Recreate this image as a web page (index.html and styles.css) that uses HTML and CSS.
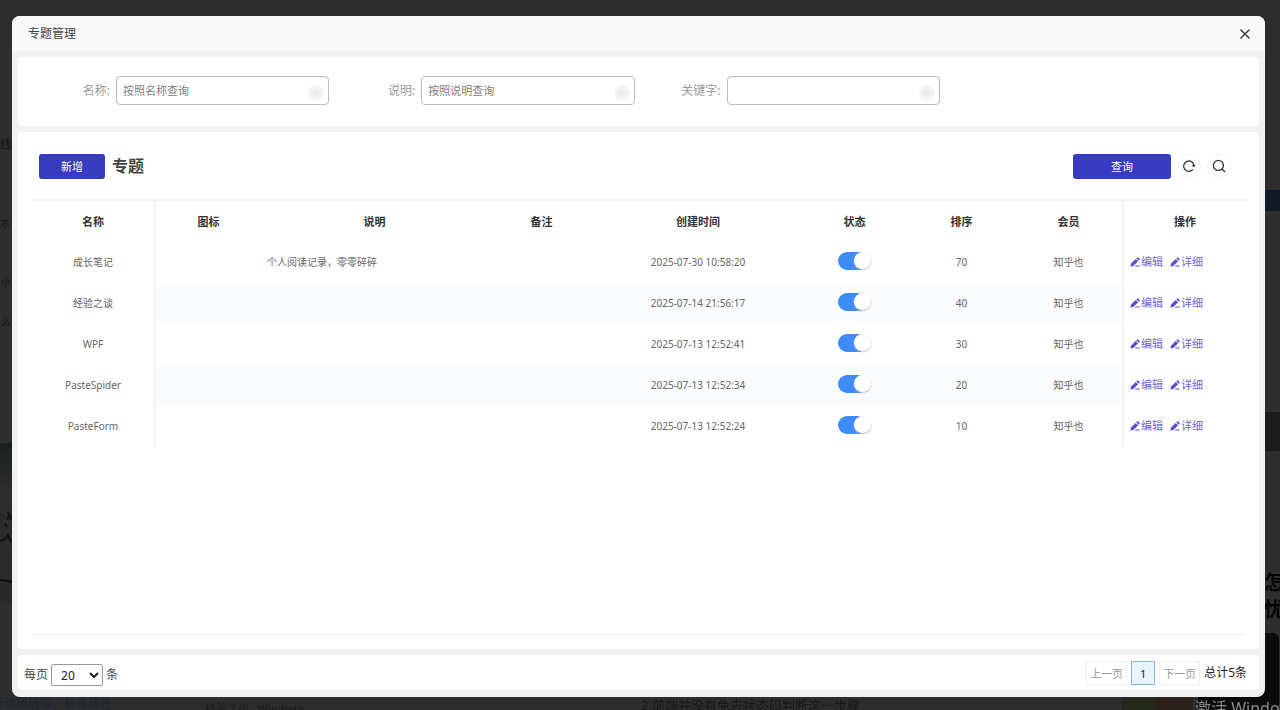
FILE: index.html
```html
<!DOCTYPE html>
<html lang="zh-CN">
<head>
<meta charset="utf-8">
<title>专题管理</title>
<link rel="stylesheet" href="styles.css">
</head>
<body>
<svg class="sprite" aria-hidden="true">
  <symbol id="pen" viewBox="0 0 10 10"><path d="M.4 9.600l.5-2.900L5.700 1.900l2.400 2.400L3.300 9.100zM6.300 1.300l.8-.8q.5-.4 1 0l1.400 1.400q.4.500 0 1l-.8.8zM5.200 8.600h4.400v1H5.200z" fill="currentColor"/></symbol>
</svg>

<div class="backdrop" aria-hidden="true">
  <span class="ghost ghost-a">贴线</span>
  <span class="ghost ghost-b">不</span>
  <span class="ghost ghost-c">小</span>
  <span class="ghost ghost-d">么</span>
  <span class="block block-left"></span>
  <svg class="scribble" viewBox="0 0 12 90"><path d="M8 12l3 8M7 19l4-4M5 24l2 3M0 41l5-2 3-4 3 7M0 80q6 0 12 2" fill="none" stroke="#111" stroke-width="2"/></svg>
  <span class="ghost ghost-link">及动用后端，包含属性</span>
  <span class="ghost ghost-tag">经验之谈 &nbsp; Windows</span>
  <span class="ghost ghost-line">2.前端并没有免去状态码判断这一步骤</span>
  <span class="block block-navy"></span>
  <span class="block block-gray"></span>
  <span class="block block-green"></span>
  <span class="block block-brown"></span>
  <span class="block block-black"></span>
  <span class="ghost ghost-big">怎<br>忧</span>
  <span class="watermark">激活 Windows</span>
</div>

<main class="dialog" role="dialog" aria-labelledby="dialog-title">
  <header class="dialog-head">
    <span class="dialog-title" id="dialog-title">专题管理</span>
    <button class="close" type="button" aria-label="关闭"><svg viewBox="0 0 12 12"><path d="M1.500 1.500l9 9M10.500 1.500l-9 9" stroke="#333" stroke-width="1.400" fill="none"/></svg></button>
  </header>

  <form class="panel filters">
    <div class="field"><label for="f-name">名称:</label><div class="box"><input id="f-name" type="text" placeholder="按照名称查询"><span class="clear"></span></div></div>
    <div class="field"><label for="f-desc">说明:</label><div class="box"><input id="f-desc" type="text" placeholder="按照说明查询"><span class="clear"></span></div></div>
    <div class="field"><label for="f-key">关键字:</label><div class="box"><input id="f-key" type="text"><span class="clear"></span></div></div>
  </form>

  <section class="panel content">
    <div class="toolbar">
      <button class="primary" type="button">新增</button>
      <h1>专题</h1>
      <button class="primary wide" type="button">查询</button>
      <button class="round" type="button" aria-label="刷新"><svg viewBox="0 0 14 14"><path d="M12 6.500A5.200 5.200 0 1 0 10.800 10.500" fill="none" stroke="#333" stroke-width="1.300"/><path d="M9.600 6h4l-1.600 2.600z" fill="#333"/></svg></button>
      <button class="round" type="button" aria-label="搜索"><svg viewBox="0 0 14 14"><circle cx="6.400" cy="6.400" r="5" fill="none" stroke="#333" stroke-width="1.300"/><path d="M10 10l3 3" stroke="#333" stroke-width="1.400"/></svg></button>
    </div>
    <div class="table-area">
      <table>
        <colgroup><col class="c-name"><col class="c-s"><col class="c-desc"><col class="c-s"><col class="c-time"><col class="c-s"><col class="c-s"><col class="c-s"><col class="c-ops"></colgroup>
        <thead><tr><th>名称</th><th>图标</th><th>说明</th><th>备注</th><th>创建时间</th><th>状态</th><th>排序</th><th>会员</th><th>操作</th></tr></thead>
        <tbody>
          <tr><td>成长笔记</td><td></td><td class="left">个人阅读记录，零零碎碎</td><td></td><td>2025-07-30 10:58:20</td><td class="state"><input class="switch" type="checkbox" checked aria-label="成长笔记 状态"></td><td>70</td><td>知乎也</td><td class="ops"><div><a href="#"><svg><use href="#pen"/></svg>编辑</a><a href="#"><svg><use href="#pen"/></svg>详细</a></div></td></tr>
          <tr><td>经验之谈</td><td></td><td></td><td></td><td>2025-07-14 21:56:17</td><td class="state"><input class="switch" type="checkbox" checked aria-label="经验之谈 状态"></td><td>40</td><td>知乎也</td><td class="ops"><div><a href="#"><svg><use href="#pen"/></svg>编辑</a><a href="#"><svg><use href="#pen"/></svg>详细</a></div></td></tr>
          <tr><td>WPF</td><td></td><td></td><td></td><td>2025-07-13 12:52:41</td><td class="state"><input class="switch" type="checkbox" checked aria-label="WPF 状态"></td><td>30</td><td>知乎也</td><td class="ops"><div><a href="#"><svg><use href="#pen"/></svg>编辑</a><a href="#"><svg><use href="#pen"/></svg>详细</a></div></td></tr>
          <tr><td>PasteSpider</td><td></td><td></td><td></td><td>2025-07-13 12:52:34</td><td class="state"><input class="switch" type="checkbox" checked aria-label="PasteSpider 状态"></td><td>20</td><td>知乎也</td><td class="ops"><div><a href="#"><svg><use href="#pen"/></svg>编辑</a><a href="#"><svg><use href="#pen"/></svg>详细</a></div></td></tr>
          <tr><td>PasteForm</td><td></td><td></td><td></td><td>2025-07-13 12:52:24</td><td class="state"><input class="switch" type="checkbox" checked aria-label="PasteForm 状态"></td><td>10</td><td>知乎也</td><td class="ops"><div><a href="#"><svg><use href="#pen"/></svg>编辑</a><a href="#"><svg><use href="#pen"/></svg>详细</a></div></td></tr>
        </tbody>
      </table>
    </div>
  </section>

  <footer class="panel foot">
    <div class="size"><label for="size">每页</label><select id="size"><option>20</option><option>50</option></select><span>条</span></div>
    <nav class="pager"><button type="button">上一页</button><button class="current" type="button">1</button><button type="button">下一页</button><span>总计5条</span></nav>
  </footer>
</main>
</body>
</html>
```
FILE: styles.css
```css
* { box-sizing: border-box; }

body {
  margin: 0;
  min-height: 100vh;
  padding: 16px 15px 13px 12px;
  display: flex;
  background: #2d2d2d;
  font-family: "Noto Sans", "Noto Sans CJK SC", sans-serif;
  font-size: 12px;
  line-height: 16px;
  color: #444;
}

button, input, select { font-family: inherit; margin: 0; }
button { cursor: pointer; padding: 0; }
.sprite { position: absolute; width: 0; height: 0; }

/* Dimmed page under the dialog */
.backdrop { position: fixed; inset: 0; overflow: hidden; }
.ghost, .block, .watermark, .scribble { position: absolute; white-space: nowrap; }
.ghost { color: #181818; }
.ghost-a { left: -12px; top: 137px; }
.ghost-b { left: 0; top: 216px; font-size: 10px; }
.ghost-c { left: 1px; top: 274px; font-size: 10px; }
.ghost-d { left: 1px; top: 314px; font-size: 10px; }
.ghost-link { left: -8px; top: 696px; color: #1b2633; }
.ghost-tag { left: 205px; top: 701px; font-size: 11px; }
.ghost-line { left: 641px; top: 697px; font-size: 13px; }
.ghost-big { left: 1264px; top: 569px; font-size: 20px; line-height: 27px; font-weight: 700; color: #050505; }
.block-left { left: 0; top: 443px; width: 12px; height: 160px; background: linear-gradient(#1a2122, #2c2c2b 30%, #292927); }
.scribble { left: 0; top: 500px; width: 12px; height: 90px; }
.block-navy { right: 0; top: 190px; width: 16px; height: 21px; background: #131827; }
.block-gray { right: 0; top: 412px; width: 16px; height: 39px; background: #1c1c1c; }
.block-green { left: 1122px; bottom: 0; width: 33px; height: 13px; background: #242819; }
.block-brown { left: 1155px; bottom: 0; width: 38px; height: 13px; background: #2c211a; }
.block-black { left: 1198px; top: 633px; width: 81px; height: 77px; background: #0b0b0b; border-radius: 6px; }
.watermark { left: 1195px; top: 698px; font-size: 16px; line-height: 20px; color: #8a8a8a; }

.dialog {
  position: relative;
  flex: 1;
  min-width: 0;
  display: flex;
  flex-direction: column;
  gap: 6px;
  padding: 0 6px 7px;
  background: #f2f2f2;
  border-radius: 8px;
  overflow: hidden;
}
.dialog-head {
  display: flex;
  justify-content: space-between;
  align-items: center;
  height: 35px;
  margin: 0 -6px;
  padding: 0 14px 0 16px;
  background: #f8f8f8;
}
.close { width: 12px; height: 12px; border: 0; background: none; }
.close svg { display: block; width: 12px; height: 12px; }

.panel { background: #fff; border-radius: 4px; }

.filters {
  display: grid;
  grid-template-columns: repeat(4, 1fr);
  padding: 19px 14px 21px 6px;
}
.field { display: flex; align-items: center; gap: 6px; }
.field label { flex: 0 0 86px; text-align: right; color: #999; }
.box { position: relative; flex: 1; }
.box input {
  display: block;
  width: 100%;
  height: 29px;
  padding: 0 6px 1px;
  border: 1px solid #bbb;
  border-radius: 4px;
  background: #fff;
  font-size: 11px;
  color: #333;
}
.box input::placeholder { color: #808080; }
.clear { position: absolute; right: 5px; bottom: 4px; width: 16px; height: 16px; border-radius: 8px; background: radial-gradient(#ebebeb 20%, #f5f5f5 50%); }

.content { flex: 1; padding: 21px 13px 14px 14px; display: flex; flex-direction: column; gap: 20px; }
.toolbar { display: flex; align-items: center; padding: 0 15px 0 7px; height: 26px; }
h1 { margin: 0 auto 0 7px; font-size: 16px; line-height: 24px; font-weight: 700; }
.primary { width: 66px; height: 25px; border: 0; border-radius: 3px; background: #373bc1; color: #fff; font-size: 11px; }
.wide { width: 98px; }
.round { display: grid; place-items: center; width: 24px; height: 24px; margin-left: 6px; border: 1px solid #f3f3f3; border-radius: 12px; background: #fff; }
.round svg { width: 14px; height: 14px; }

.table-area { flex: 1; border-top: 2px solid #f3f3f3; border-bottom: 1px solid #ececec; }
table { width: 100%; table-layout: fixed; border-collapse: separate; border-spacing: 0; }
.c-name { width: 122px; }
.c-s { width: 107px; }
.c-desc { width: 227px; }
.c-time { width: 206px; }
.c-ops { width: 124px; }
th, td { padding: 0; text-align: center; }
th { height: 41px; font-size: 11px; font-weight: 700; color: #333; }
td { height: 41px; padding-bottom: 2px; font-size: 10px; color: #666; }
tbody tr:nth-child(even) td { background: #fafcfe; }
tbody tr td:first-child, tbody tr td:last-child { background: #fff; }
tr > :nth-child(2) { border-left: 2px solid #f4f4f4; }
tr > :last-child { border-left: 2px solid #f2f2f2; }
td.left { text-align: left; padding-left: 6px; }
td.state { padding-bottom: 4px; }
.ops div { display: flex; gap: 7px; padding-left: 6px; }
.ops a { display: flex; align-items: center; gap: 1px; font-size: 11px; color: #6f63dc; text-decoration: none; }
.ops svg { width: 10px; height: 10px; color: #5a4bd0; }

.switch {
  appearance: none;
  display: block;
  width: 33px;
  height: 18px;
  margin: 0 auto;
  border-radius: 9px;
  background: linear-gradient(90deg, #3f8bf5 70%, transparent 70%);
  cursor: pointer;
}
.switch::before {
  content: "";
  display: block;
  width: 17px;
  height: 17px;
  margin-left: auto;
  border-radius: 50%;
  background: #fff;
  box-shadow: 0 1px 2px #bbb;
}
.switch:not(:checked) { background: #ddd; }
.switch:not(:checked)::before { margin-left: 0; }

.foot { display: flex; justify-content: space-between; align-items: center; padding: 5px 12px 4px 6px; }
.size { display: flex; align-items: center; gap: 3px; padding-top: 4px; }
select { width: 52px; height: 22px; padding: 0 0 0 5px; border: 1px solid #999; border-radius: 2px; background: #fff; color: #222; font-size: 12px; }
.pager { display: flex; align-items: center; gap: 4px; color: #222; }
.pager button { height: 24px; padding: 0 3px; border: 1px solid #f0f0f0; background: #fff; color: #999; font-size: 11px; }
.pager .current { width: 24px; border-color: #80b4ea; background: #e8f4ff; color: #222; }
```
